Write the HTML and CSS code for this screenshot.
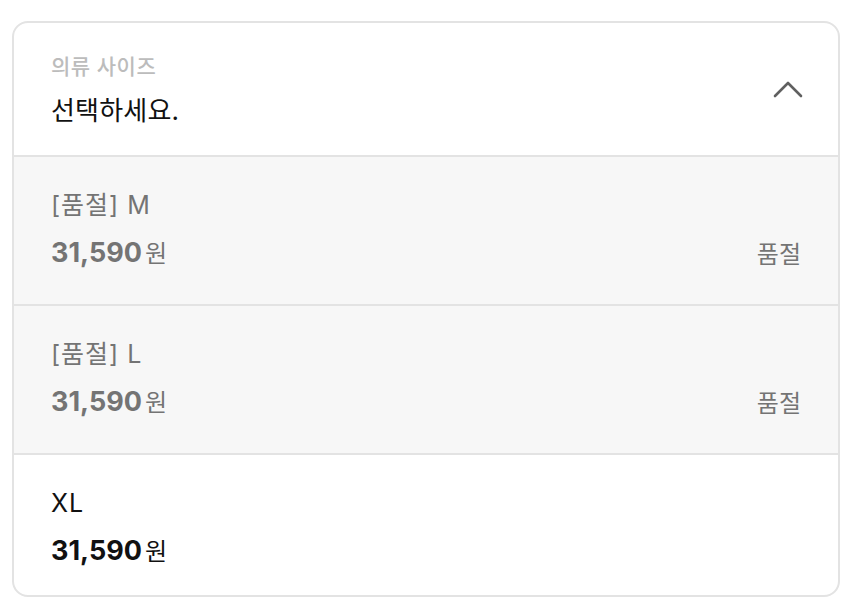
FILE: index.html
```html
<!DOCTYPE html>
<html lang="ko">
<head>
  <meta charset="UTF-8">
  <meta name="viewport" content="width=device-width, initial-scale=1">
  <title>의류 사이즈</title>
  <link rel="stylesheet" href="styles.css">
</head>
<body>
  <div class="select-box">
    <div class="select-head">
      <div>
        <p class="label">의류 사이즈</p>
        <p class="value">선택하세요.</p>
      </div>
      <svg class="chevron" width="30" height="18" viewBox="0 0 30 18">
        <path d="M2 16 L15 3 L28 16" fill="none" stroke="#606060" stroke-width="2.6" stroke-linecap="round" stroke-linejoin="round"/>
      </svg>
    </div>
    <ul class="options">
      <li class="option soldout">
        <div>
          <p class="name">[품절] M</p>
          <p class="price"><strong>31,590</strong>원</p>
        </div>
        <span class="state">품절</span>
      </li>
      <li class="option soldout">
        <div>
          <p class="name">[품절] L</p>
          <p class="price"><strong>31,590</strong>원</p>
        </div>
        <span class="state">품절</span>
      </li>
      <li class="option">
        <div>
          <p class="name">XL</p>
          <p class="price"><strong>31,590</strong>원</p>
        </div>
      </li>
    </ul>
  </div>
</body>
</html>
```

FILE: styles.css
```css
body { margin:0; padding:21px 10px 0 12px; background:#fff; font-family:Inter, "Noto Sans CJK KR", sans-serif; color:#111; }
p { margin:0; }
.select-box { border:2px solid #e3e3e3; border-radius:16px; overflow:hidden; height:576px; box-sizing:border-box; }
.select-head { display:flex; justify-content:space-between; align-items:center; height:132px; padding:0 35px 0 37px; border-bottom:2px solid #e3e3e3; }
.select-head > div { align-self:flex-start; padding-top:30px; }
.label { font-size:21px; font-weight:500; color:#bcbcbc; line-height:28px; letter-spacing:0.5px; }
.value { font-size:26px; line-height:34px; margin-top:13px; letter-spacing:0.2px; }
.options { list-style:none; margin:0; padding:0; }
.option { display:flex; justify-content:space-between; align-items:flex-start; height:147px; padding:0 37px 0 37px; border-bottom:2px solid #e3e3e3; }
.option:last-child { border-bottom:none; height:140px; }
.option > div { padding-top:31px; }
.soldout { background:#f7f7f7; }
.name { font-size:25px; line-height:34px; letter-spacing:1px; }
.price { font-size:24px; line-height:36px; margin-top:13px; }
.price strong { font-size:27px; font-weight:700; margin-right:3px; }
.soldout .name, .soldout .price { color:#747474; }
.state { font-size:24px; line-height:36px; color:#747474; margin-top:80px; }
```
